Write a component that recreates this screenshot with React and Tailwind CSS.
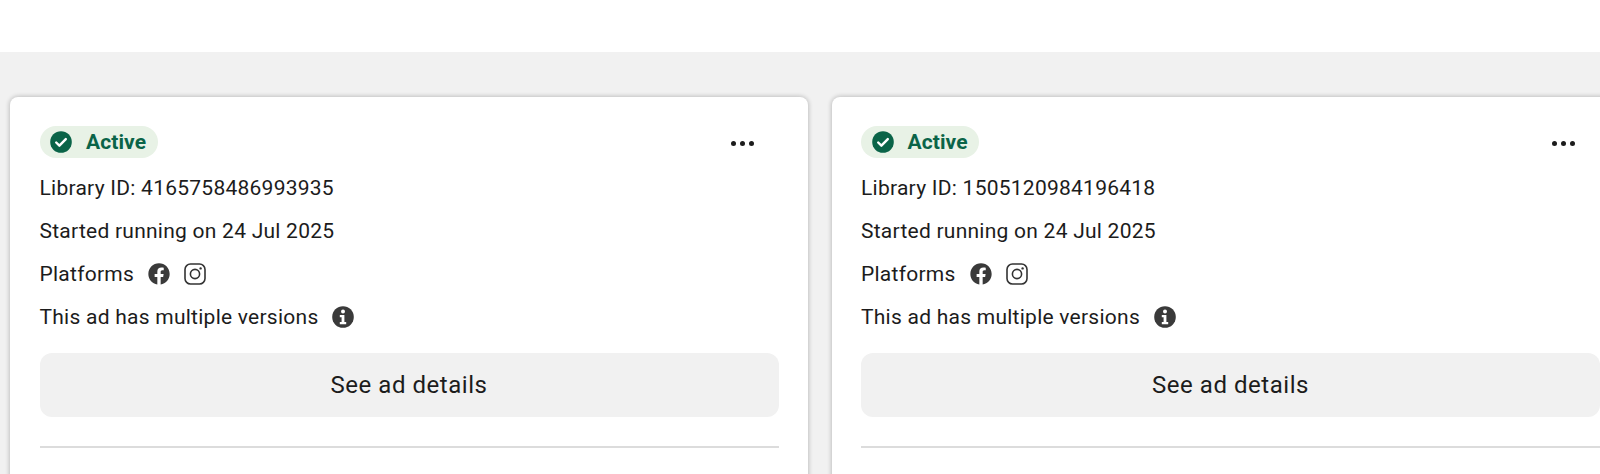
import { FaFacebook } from 'react-icons/fa'

const ADS = [
  { id: '4165758486993935' },
  { id: '1505120984196418' },
]

function CheckBadge() {
  return (
    <svg width="22" height="22" viewBox="0 0 22 22">
      <circle cx="11" cy="11" r="10.8" fill="#0a6448" />
      <path d="M6.2 11.5l3.2 3.2 6.4-6.6" fill="none" stroke="#fff" strokeWidth="2.4" strokeLinecap="round" strokeLinejoin="round" />
    </svg>
  )
}

function Instagram() {
  return (
    <svg width="22" height="22" viewBox="0 0 22 22" fill="none" stroke="#333" strokeWidth="1.6">
      <rect x="1" y="1" width="20" height="20" rx="5.5" />
      <circle cx="11" cy="11" r="4.6" />
      <circle cx="16.6" cy="5.4" r="1.2" fill="#333" stroke="none" />
    </svg>
  )
}

function InfoIcon() {
  return (
    <svg width="22" height="22" viewBox="0 0 22 22">
      <circle cx="11" cy="11" r="10.8" fill="#3a3a3a" />
      <circle cx="11" cy="5.6" r="2" fill="#fff" />
      <path d="M7.8 9h4.6v7h1.8v2.2H7.8V16h1.8v-4.8H7.8z" fill="#fff" />
    </svg>
  )
}

function AdCard({ id }) {
  return (
    <div className="w-[797.5px] h-[420px] shrink-0 bg-white rounded-lg shadow-[0_0_4px_1px_rgba(0,0,0,0.2)] pt-[29px] pl-[29.5px] pr-[29px]">
      <div className="flex items-start justify-between h-8 mb-[15px]">
        <div className="h-8 w-[118px] rounded-full bg-[#e8f2e6] flex items-center pl-[10.5px] gap-[14px]">
          <CheckBadge />
          <span className="text-[21px] font-bold text-[#0a6448] tracking-[0.1px] mt-px">Active</span>
        </div>
        <div className="flex gap-[4px] mt-[15px] mr-[25px]">
          <span className="w-[5px] h-[5px] rounded-full bg-[#1c1c1c]" />
          <span className="w-[5px] h-[5px] rounded-full bg-[#1c1c1c]" />
          <span className="w-[5px] h-[5px] rounded-full bg-[#1c1c1c]" />
        </div>
      </div>
      <div className="flex flex-col gap-[13px] text-[21px] leading-[30px] text-[#1c1c1c] tracking-[0.25px]">
        <div>Library ID: {id}</div>
        <div>Started running on 24 Jul 2025</div>
        <div className="flex items-center">
          <span>Platforms</span>
          <FaFacebook className="ml-[14px] text-[#3a3a3a]" size={22} />
          <span className="ml-[14px]"><Instagram /></span>
        </div>
        <div className="flex items-center">
          <span>This ad has multiple versions</span>
          <span className="ml-[14px]"><InfoIcon /></span>
        </div>
      </div>
      <button className="block w-full h-16 mt-[21px] rounded-xl bg-[#f1f1f1] text-[24px] text-[#1c1c1c] tracking-[0.55px]">
        See ad details
      </button>
      <div className="h-[2px] mt-[29px] bg-[#dcdcdc]" />
    </div>
  )
}

export default function App() {
  return (
    <div className="h-[474px] overflow-hidden bg-white font-['Roboto',sans-serif]">
      <div className="h-[52px]" />
      <div className="h-[422px] bg-[#f1f1f1] overflow-hidden flex gap-[24px] pl-[10px] pt-[45px]">
        {ADS.map(ad => <AdCard key={ad.id} id={ad.id} />)}
      </div>
    </div>
  )
}
